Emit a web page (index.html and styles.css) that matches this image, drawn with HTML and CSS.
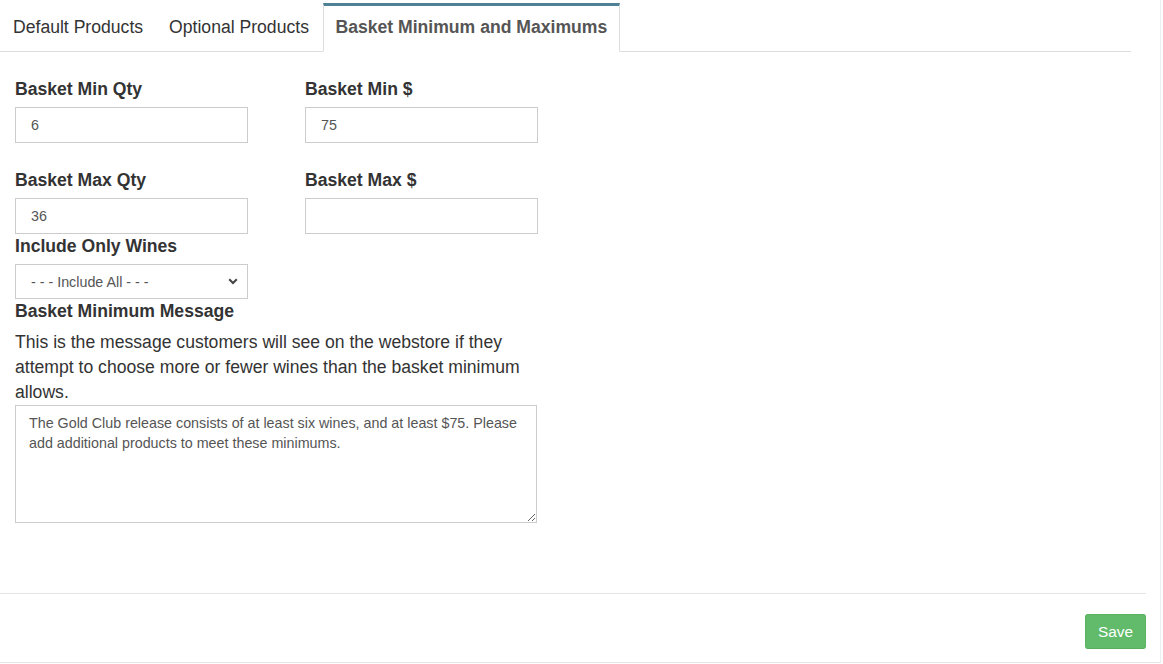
FILE: index.html
```html
<!DOCTYPE html>
<html>
<head>
<meta charset="utf-8">
<link rel="stylesheet" href="styles.css">
</head>
<body>
<div class="panel">
  <div class="tabs-wrap">
    <ul class="tabs">
      <li class="tab">Default Products</li>
      <li class="tab">Optional Products</li>
      <li class="tab active">Basket Minimum and Maximums</li>
    </ul>
  </div>
  <div class="content">
    <div class="row first">
      <div class="field">
        <label class="lbl">Basket Min Qty</label>
        <input class="ctl" type="text" value="6">
      </div>
      <div class="field">
        <label class="lbl">Basket Min $</label>
        <input class="ctl" type="text" value="75">
      </div>
    </div>
    <div class="row second">
      <div class="field">
        <label class="lbl">Basket Max Qty</label>
        <input class="ctl" type="text" value="36">
      </div>
      <div class="field">
        <label class="lbl">Basket Max $</label>
        <input class="ctl" type="text" value="">
      </div>
    </div>
    <div class="field tight">
      <label class="lbl">Include Only Wines</label>
      <div class="select-wrap">
        <select class="ctl sel"><option>- - - Include All - - -</option></select>
        <svg class="chev" width="10" height="7" viewBox="0 0 10 7"><path d="M1.2 1.2 L5 5 L8.8 1.2" fill="none" stroke="#444" stroke-width="2"/></svg>
      </div>
    </div>
    <div class="field tight">
      <label class="lbl">Basket Minimum Message</label>
      <p class="help">This is the message customers will see on the webstore if they attempt to choose more or fewer wines than the basket minimum allows.</p>
      <textarea class="ta">The Gold Club release consists of at least six wines, and at least $75. Please add additional products to meet these minimums.</textarea>
    </div>
  </div>
  <div class="footer">
    <button class="save">Save</button>
  </div>
</div>
</body>
</html>
```
FILE: styles.css
```css
* { box-sizing: border-box; }
html, body { margin: 0; padding: 0; background: #fff; }
body { font-family: "Liberation Sans", Arial, sans-serif; color: #333; }
.panel {
  width: 1161px;
  height: 663px;
  border-right: 1px solid #eee;
  border-bottom: 1px solid #e5e5e5;
  display: flex;
  flex-direction: column;
}
.tabs-wrap { padding-top: 3px; width: 1131px; }
.tabs {
  list-style: none;
  margin: 0;
  padding: 0;
  display: flex;
  border-bottom: 1px solid #ddd;
}
.tab {
  height: 49px;
  margin-bottom: -1px;
  padding: 0 12px;
  border: 1px solid transparent;
  border-top-width: 3px;
  font-size: 17.6px;
  line-height: 43px;
  color: #333;
  white-space: nowrap;
}
.tab.active {
  border-color: #ddd;
  border-top-color: #4f8194;
  border-bottom-color: #fff;
  background: #fff;
  font-weight: bold;
  color: #555;
  margin-left: 1px;
  padding: 0 11.5px;
}
.content { padding: 0 15px; width: 552px; flex: 1; }
.row { display: flex; gap: 57px; }
.row .field { width: 233px; }
.row.first { margin-top: 27px; }
.row.second { margin-top: 27px; }
.field.tight { margin-top: 2px; }
.lbl {
  display: block;
  font-size: 17.6px;
  font-weight: bold;
  line-height: 20px;
  margin-bottom: 8px;
  color: #333;
}
.ctl {
  display: block;
  width: 233px;
  height: 36px;
  border: 1px solid #ccc;
  padding: 0 15px;
  font-family: "Liberation Sans", Arial, sans-serif;
  font-size: 14.3px;
  color: #555;
  background: #fff;
  margin: 0;
  outline: none;
  border-radius: 0;
}
.select-wrap { position: relative; width: 233px; }
.sel {
  height: 35px;
  appearance: none;
  -webkit-appearance: none;
}
.chev { position: absolute; right: 10px; top: 14px; }
.help {
  margin: 9px 0 0;
  font-size: 17.6px;
  line-height: 25px;
  color: #333;
  width: 522px;
}
.ta {
  display: block;
  width: 522px;
  height: 118px;
  border: 1px solid #ccc;
  padding: 7px 13px;
  font-family: "Liberation Sans", Arial, sans-serif;
  font-size: 14.3px;
  line-height: 20px;
  color: #555;
  resize: vertical;
  margin: 0;
  border-radius: 0;
}
.footer {
  width: 1146px;
  height: 69px;
  border-top: 1px solid #e5e5e5;
  display: flex;
  justify-content: flex-end;
  align-items: flex-start;
  padding-top: 20px;
}
.save {
  width: 61px;
  height: 35px;
  background: #61bb6a;
  border: 1px solid #5cb363;
  border-bottom-color: #57ad5e;
  border-radius: 3px;
  color: #fff;
  font-family: "Liberation Sans", Arial, sans-serif;
  font-size: 15.4px;
  padding: 0;
}
```
